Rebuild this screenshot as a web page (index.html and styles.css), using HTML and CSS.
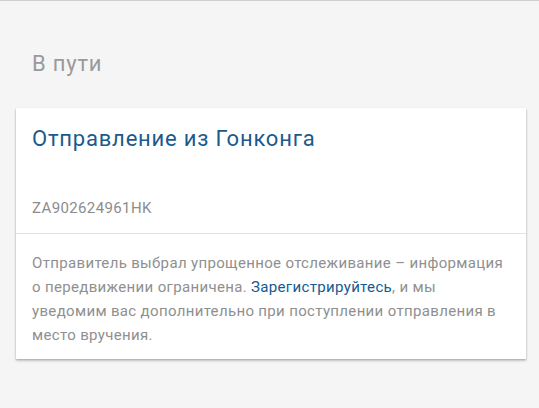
FILE: index.html
```html
<!DOCTYPE html>
<html lang="ru">
<head>
<meta charset="utf-8">
<link rel="stylesheet" href="styles.css">
</head>
<body>
<div class="page">
  <h1 class="status">В пути</h1>
  <div class="card">
    <div class="card-head">
      <div class="card-title">Отправление из Гонконга</div>
      <div class="track">ZA902624961HK</div>
    </div>
    <div class="card-body">
      Отправитель выбрал упрощенное отслеживание – информация о передвижении ограничена. <a class="link" href="#">Зарегистрируйтесь</a>, и мы уведомим вас дополнительно при поступлении отправления в место вручения.
    </div>
  </div>
</div>
</body>
</html>
```
FILE: styles.css
```css
html, body {
  margin: 0;
  padding: 0;
}
body {
  background: #f5f5f5;
  font-family: Roboto, "Noto Sans", sans-serif;
  border-top: 1px solid #cfcfcf;
  height: 407px;
  overflow: hidden;
}
.page {
  padding: 49px 13px 0 16px;
}
.status {
  margin: 0 0 30px 16px;
  font-size: 22px;
  line-height: 28px;
  font-weight: 400;
  letter-spacing: 0.8px;
  color: #9a9a9a;
}
.card {
  background: #fff;
  box-shadow: 0 1px 2px rgba(0,0,0,0.25), 0 2px 3px rgba(0,0,0,0.12);
}
.card-head {
  padding: 17px 16px 15px 16px;
  border-bottom: 1px solid #e3e3e3;
}
.card-title {
  font-size: 22px;
  line-height: 28px;
  letter-spacing: 0.8px;
  color: #1b5a8d;
  margin-bottom: 45px;
}
.track {
  font-size: 15px;
  line-height: 20px;
  letter-spacing: 0.38px;
  color: #8c8c8c;
}
.card-body {
  padding: 17px 16px 12px 16px;
  font-size: 15px;
  line-height: 24px;
  letter-spacing: 0.34px;
  color: #8f8f8f;
}
.link {
  color: #135b90;
  text-decoration: none;
}
```
